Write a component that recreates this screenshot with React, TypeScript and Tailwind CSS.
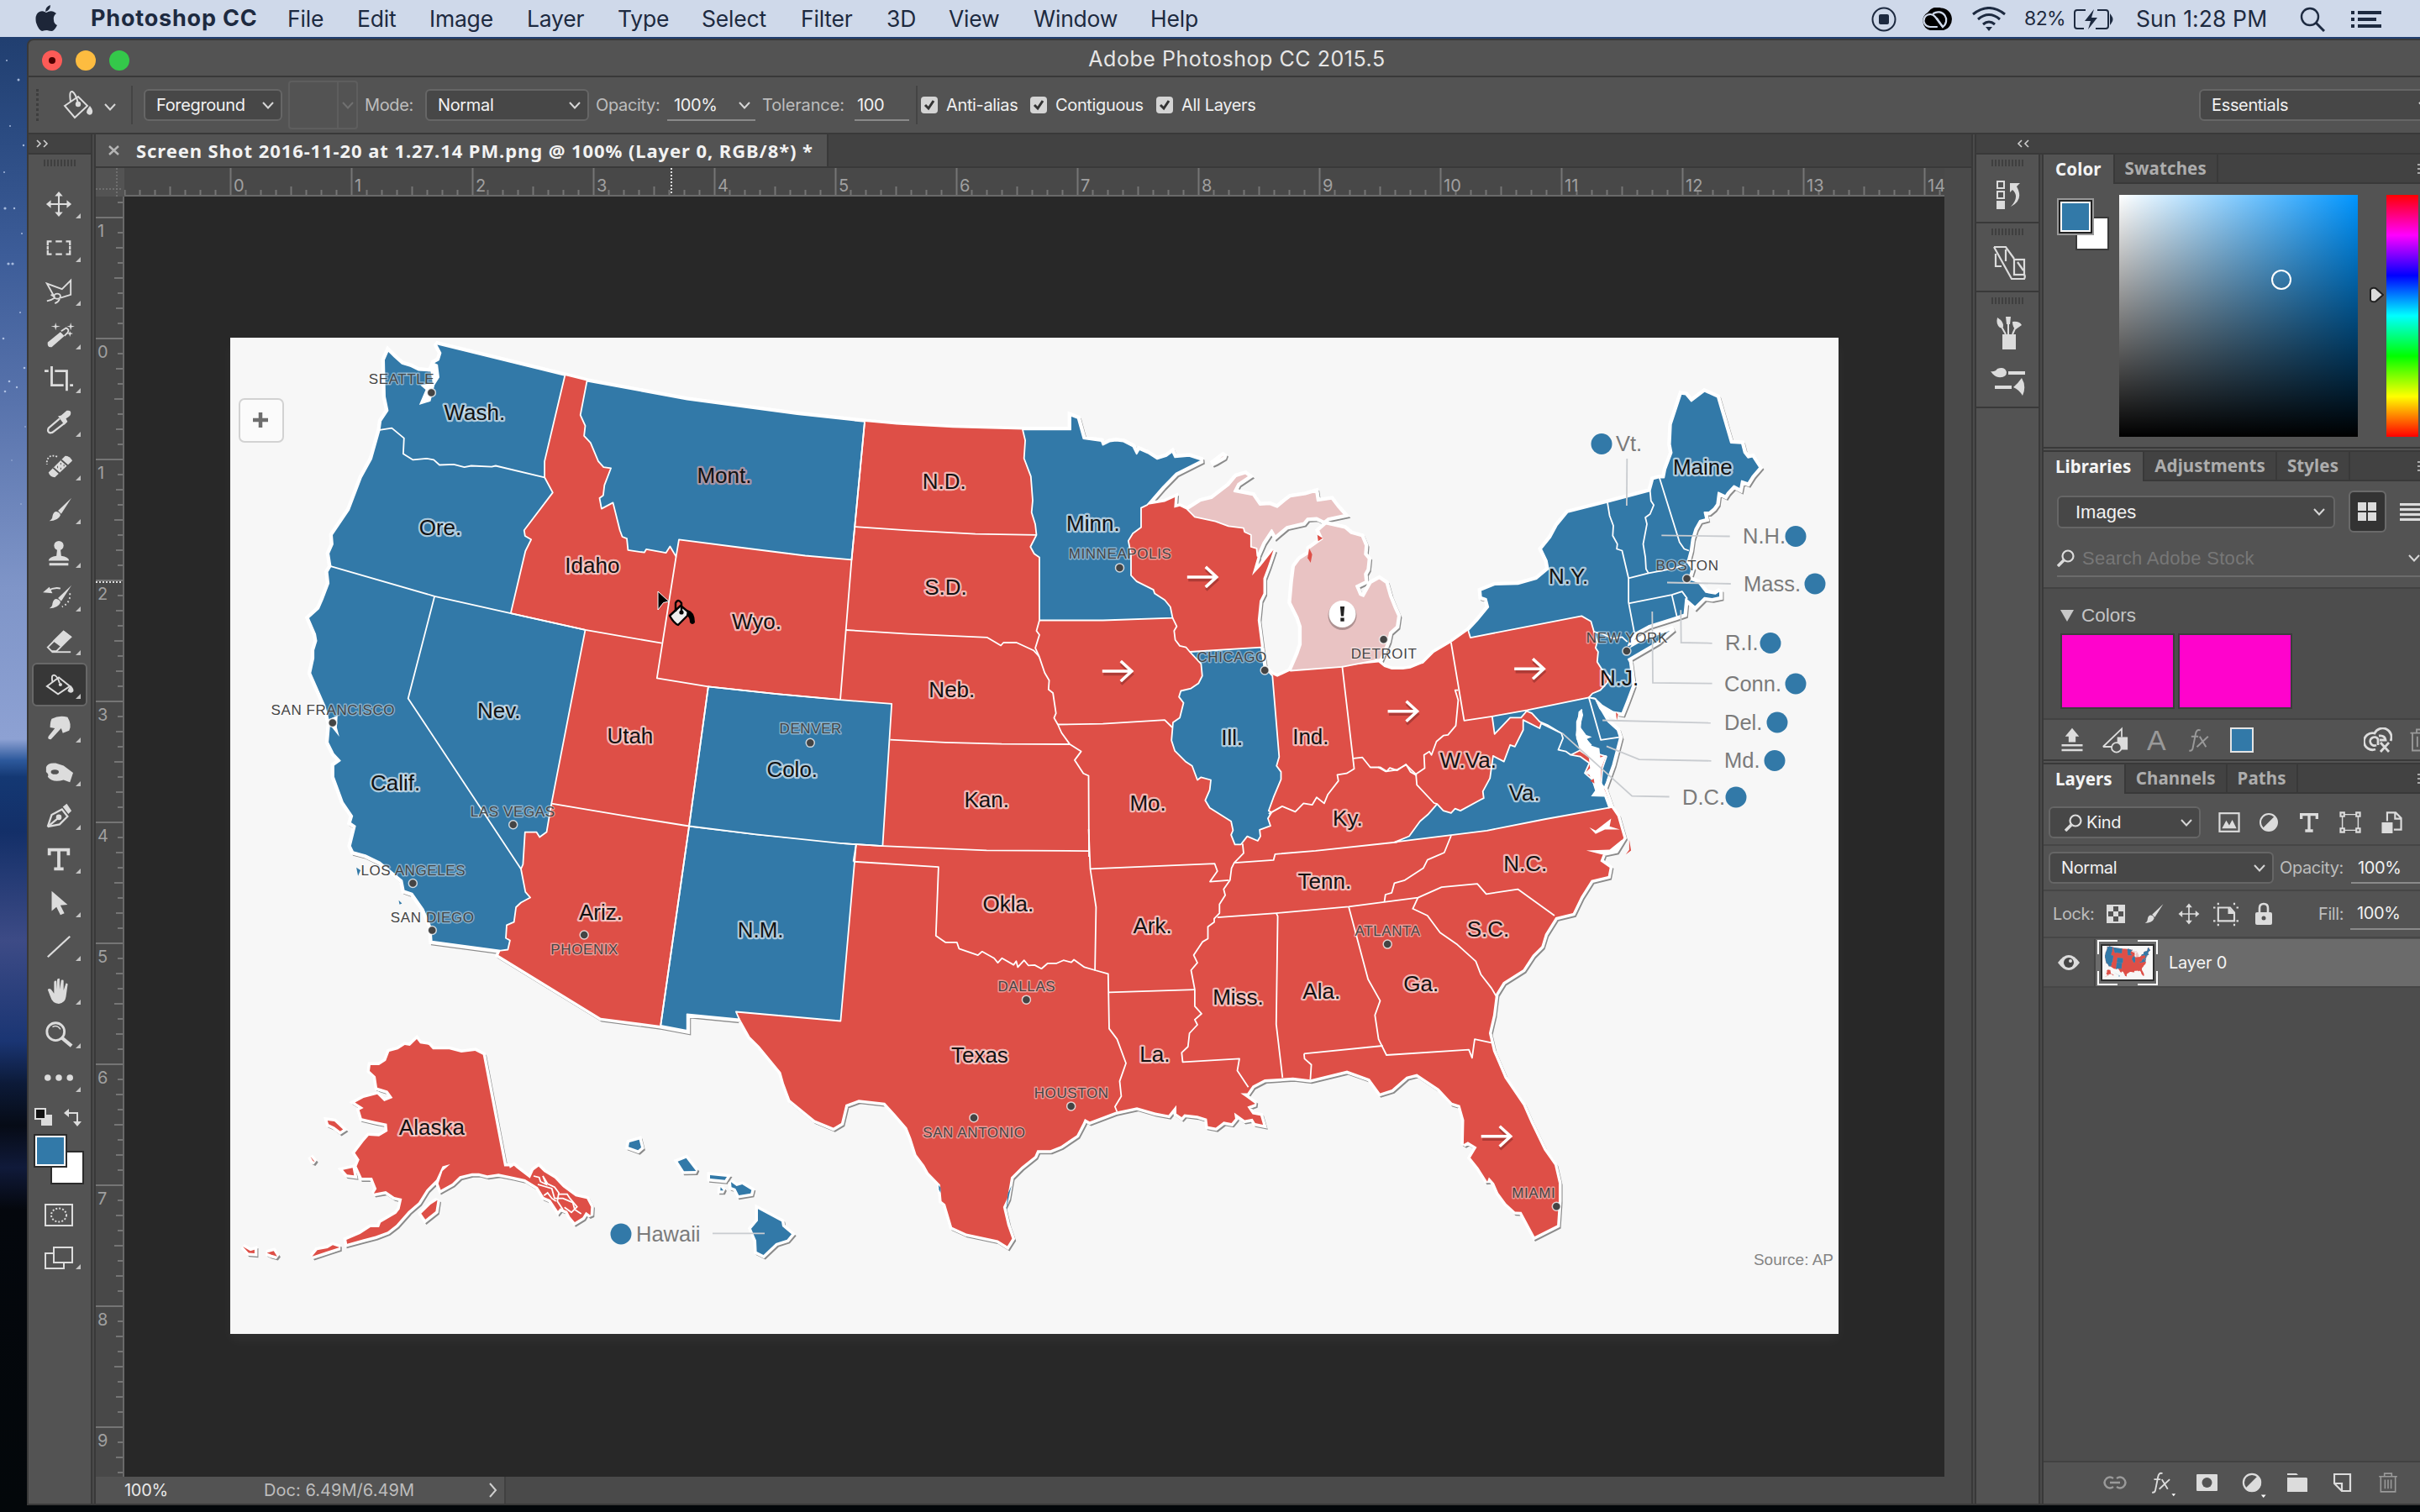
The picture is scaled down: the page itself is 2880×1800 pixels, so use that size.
import React from "react";

type Pt = (s: string) => string;

/** Builds a converter from a local grid (origin + scale) to document pixels. */
const grid =
  (ox: number, oy: number, sx: number, sy: number): Pt =>
  (s) =>
    s
      .split(" ")
      .map((p) => {
        const [x, y] = p.split(",").map(Number);
        return `${(ox + x * sx).toFixed(1)},${(oy + y * sy).toFixed(1)}`;
      })
      .join(" ");

const W = grid(270, 390, 0.4847, 0.5485);
const M = grid(1000, 460, 0.4464, 0.3571);
const E = grid(1640, 440, 0.3699, 0.3954);
const S = grid(1000, 980, 0.625, 0.3571);
const A = grid(0, 960, 0.4082, 0.5357);
const H = grid(560, 1330, 0.3333, 0.3333);
const T = grid(0, 0, 1.8367, 1.8367);

const join = (...parts: string[]) => parts.join(" ");

const BLUE = "#3279a8";
const RED = "#de4f47";
const PINK = "#e9c3c3";

const northWest = "396,50 412,64 430,78 452,84 470,92 500,94 508,76 520,70 525,55 513,35";
const northLine = "830,104 884,116 1130,156 1400,188 1566,204";
const minnNorth =
  "614,144 614,97 633,106 648,174 696,182 700,195 718,184 735,181 755,184 780,200 790,225 797,210 820,222 845,242 870,232 885,218 892,236 930,232 965,246 895,290 860,335 818,395";
const wisconsinEast =
  "865,385 892,370 890,405 905,400 925,412 945,435 1000,450 1035,466 1075,472 1078,485 1095,495 1095,535 1110,538 1112,570 1098,630 1120,600 1155,545 1140,600 1128,640 1128,690 1118,715 1113,780 1122,870";
const lakeSouth = "1130,935 1150,960 1165,968 1200,948 1338,932 1435,920 1450,935 1470,944 1500,944 1520,940 1550,925";
const nyNorth =
  "290,785 320,755 355,715 348,690 332,685 330,665 375,648 450,646 510,630 548,600 543,575 525,540 555,505 575,470 610,430 735,400 875,365 885,330 905,325 920,325 925,300 945,250 940,225 943,165 975,73 990,75 1008,95 1050,65 1092,83 1135,220 1170,222 1178,250 1190,265 1205,262 1228,295 1205,320 1190,342 1170,335 1165,360 1145,350 1125,370 1118,380 1095,370 1090,405 1080,418 1065,430 1050,430 1055,450 1035,455 1020,480 1010,510 1005,545 995,580 1010,600 1000,630 1030,640 1055,670 1085,675 1100,665 1100,685 1075,690 1050,687 1020,715 990,690 985,737 960,745 870,772 825,795 805,830 950,780 900,820 805,872";
const njCoast = "810,880 820,950 800,1000 785,1035 755,1030 720,1010 697,990";
const delCoast = "700,992 715,1020 740,1060 770,1085 778,1108 755,1190 728,1260";

const west = join(
  W(northWest),
  W(
    "830,104 780,290 780,325 800,358 730,440 732,452 747,460 733,485 697,620 880,656 797,1033 785,1095 768,1106 760,1095 732,1095 727,1165 722,1175 733,1225 745,1237 722,1248 710,1258 705,1290 687,1297 685,1325 695,1330 690,1350 672,1352 503,1332 500,1300 482,1262 455,1228 435,1222 430,1200 375,1160 340,1145 310,1138 303,1125 315,1082 303,1075 308,1060 285,1030 262,975 262,950 278,940 262,925 248,900 252,860 240,820 205,750 213,718 213,700 220,680 217,665 200,630 225,610 235,590 250,555 247,530 255,518 250,490 260,470 258,450 300,395 330,325 355,285 375,222 378,203 395,180 388,150 386,70"
  )
);
const montana = W(
  "884,116 868,190 880,213 877,235 893,250 912,290 925,303 943,305 927,342 924,364 915,370 920,393 948,380 965,440 971,454 982,458 985,483 1025,488 1030,481 1078,489 1088,475 1103,497 1110,460 1240,475 1420,495 1534,504 1566,204 1400,188 1130,156"
);
const newMexico = W("1135,1082 1300,1100 1545,1120 1507,1505 1250,1485 1258,1501 1130,1490 1130,1526 1065,1515");
const colorado = join(W("1182,779 1350,795 1500,807"), M("0,1045 137,1058 113,1532 0,1523"), W("1300,1100 1135,1082"));
const minnesota = M(
  "486,144 " +
    minnNorth +
    " 802,405 802,470 780,490 768,515 775,560 775,630 790,650 835,678 838,690 865,712 880,735 886,772 700,780 531,780 531,570 517,558 507,535 523,495 520,460 510,420 513,380 508,300 490,240 493,180"
);
const illinois = M(
  "932,885 1122,870 1130,935 1152,965 1170,1235 1163,1265 1175,1285 1175,1310 1155,1370 1142,1415 1150,1420 1140,1440 1147,1465 1118,1478 1120,1500 1113,1515 1085,1500 1068,1527 1052,1527 1042,1495 1047,1480 1042,1450 985,1405 973,1380 985,1345 988,1312 962,1303 952,1312 938,1265 920,1250 892,1215 883,1180 887,1120 905,1105 915,1055 903,1035 908,1015 935,1007 955,990 965,965 962,925"
);
const northEast = join(
  E(nyNorth),
  E(njCoast),
  E("678,987 690,975 715,965 735,945 747,925 725,910 705,880 708,850 700,838 705,820 695,790 685,758 655,742 297,807")
);
const maryland = join(
  E("367,1044 480,1025 678,987"),
  E(delCoast),
  E("718,1245 722,1200 735,1165 700,1155 680,1140 655,1145 640,1110 640,1060 655,1025 650,1080 665,1110 685,1130 620,1160 580,1145 590,1095 545,1070 520,1060 495,1035 478,1028 460,1048 425,1048 375,1097")
);
const virginia = E(
  "55,1422 100,1405 135,1360 160,1340 190,1308 210,1328 235,1335 248,1322 265,1328 330,1295 340,1290 337,1270 360,1230 370,1163 405,1180 425,1130 440,1135 467,1085 467,1055 520,1080 525,1065 590,1095 595,1110 580,1145 605,1150 620,1160 650,1165 680,1185 665,1215 690,1235 700,1265 728,1270 750,1318 540,1353 350,1388"
);

const mainland = join(
  W(northWest),
  W(northLine),
  M("150,127 300,138 486,144 " + minnNorth + " " + wisconsinEast + " " + lakeSouth),
  E("145,885 180,852 235,822"),
  E(nyNorth),
  E(njCoast),
  E(delCoast),
  E("750,1318 770,1345 782,1385 790,1410 765,1448 725,1456 715,1480 745,1500 740,1525"),
  S(
    "1430,190 1410,245 1395,300 1362,314 1342,370 1335,410 1318,440 1300,488 1262,530 1248,570 1243,640 1235,700 1243,760 1265,850 1300,940 1315,1000 1340,1090 1360,1140 1368,1200 1368,1260 1365,1340 1322,1378 1297,1296 1285,1295 1268,1268 1253,1232 1245,1200 1235,1180 1232,1195 1215,1148 1200,1115 1212,1080 1195,1062 1187,1070 1188,990 1180,940 1165,932 1140,885 1098,836 1078,845 1050,888 1028,900 1008,852 965,825 895,855 862,848 808,854 785,875 775,900 762,900 772,912 790,935 775,945 785,970 800,975 805,1005 790,1000 785,985 770,990 750,965 752,985 745,1000 730,995 715,1015 700,1010 698,985 680,975 655,970 650,980 640,968 640,940 625,973 600,965 565,947 525,962 475,995 465,985 472,960 462,1000 450,1040 420,1076 400,1090 375,1090 370,1110 345,1145 325,1180 318,1250 310,1280 318,1340 327,1385 318,1410 300,1390 240,1368 213,1346 200,1270 193,1260 190,1205 168,1165 160,1140 145,1105 135,1050 127,1015 105,970 85,932 35,922 10,938"
  ),
  T("545,728 540,731 528,726 512,713 508,702 506,695 492,678 486,672"),
  W(
    "1250,1485 1258,1501 1130,1490 1130,1526 1065,1515 918,1498 667,1362 672,1352 503,1332 500,1300 482,1262 455,1228 435,1222 430,1200 375,1160 340,1145 310,1138 303,1125 315,1082 303,1075 308,1060 285,1030 262,975 262,950 278,940 262,925 248,900 252,860 240,820 205,750 213,718 213,700 220,680 217,665 200,630 225,610 235,590 250,555 247,530 255,518 250,490 260,470 258,450 300,395 330,325 355,285 375,222 378,203 395,180 388,150 386,70"
  )
);

const upperMichigan = M(
  "925,410 960,382 990,373 1035,330 1055,300 1080,290 1090,300 1060,325 1050,350 1100,362 1118,395 1145,393 1165,403 1185,382 1200,368 1240,360 1268,350 1272,382 1310,375 1325,400 1345,428 1300,440 1290,450 1270,438 1245,440 1235,455 1190,468 1160,500 1150,478 1128,520 1112,565 1110,540 1095,535 1095,495 1078,485 1075,472 1035,466 1000,450 945,435"
);
const lowerMichigan = M(
  "1295,458 1345,472 1362,490 1390,500 1400,530 1398,560 1408,575 1405,610 1398,625 1400,650 1375,665 1385,695 1395,700 1415,655 1437,640 1455,655 1465,700 1478,740 1487,765 1483,800 1465,820 1460,850 1440,910 1338,935 1200,948 1220,890 1228,860 1228,800 1220,770 1200,720 1205,650 1210,600 1225,575 1250,555 1250,540 1285,508 1275,480"
);
const isleRoyale = M("990,258 1025,225 1022,236 1000,252");

const alaska = join(
  A(
    "1215,517 1225,527 1250,530 1262,540 1310,540 1345,547 1385,543 1408,552 1470,800 1485,800"
  ),
  H("140,182 155,173 165,182 212,218 225,190 243,176 262,195 300,218 330,250 375,283 415,292 430,320 428,350 412,338 400,358 372,375 355,355 345,335 320,325 312,335 285,295 262,285 240,250 195,222 150,212 100,202 60,208 30,200 5,200"),
  A(
    "1340,822 1318,838 1285,852 1278,838 1290,810 1312,795 1290,800 1272,830 1243,852 1220,880 1190,900 1155,930 1130,945 1095,955 1060,962 1012,972 1010,963 1050,950 1080,935 1105,935 1110,925 1155,905 1165,895 1172,872 1150,868 1125,855 1090,860 1098,850 1085,825 1055,825 1040,800 1048,785 1035,770 1060,745 1075,732 1105,733 1130,722 1128,705 1095,700 1055,693 1048,675 1060,670 1035,658 1060,648 1100,640 1120,655 1145,648 1130,632 1100,625 1095,600 1078,588 1080,575 1105,575 1125,565 1135,545 1160,540 1180,530 1195,532"
  )
);
const alaskaIslands = [
  A("955,698 975,700 1000,718 992,722 975,712 958,706"),
  A("905,778 918,790 912,788"),
  A("1000,808 1028,803 1032,820 1012,818"),
  A("708,978 730,988 742,985 742,993 725,992"),
  A("778,992 798,988 808,1000 790,996"),
  A("910,1000 925,986 955,982 970,975 990,980 950,990"),
  A("1228,905 1255,885 1275,875 1270,900 1240,918"),
];
const hawaii = [
  H("567,90 602,80 609,108 598,118 564,106"),
  H("740,158 770,146 805,192 762,193"),
  H("855,207 915,213 908,224 855,219"),
  H("893,250 903,262 892,262"),
  H("930,232 950,246 970,240 1003,260 1000,272 958,279 946,255 932,250"),
  H("1026,328 1110,373 1113,390 1146,418 1130,437 1090,450 1046,492 1022,480 1020,440 1002,398 1026,370"),
];

const borders = [
  W("375,222 405,218 435,240 433,274 457,287 490,284 508,287 522,298 557,297 583,303 600,300 650,302 660,300 780,325"),
  W("255,518 510,583 697,620 880,656 1068,685"),
  W("510,583 445,805 722,1175"),
  W("1103,497 1056,761 1182,779 1135,1082 1065,1515"),
  W("797,1033 1000,1063 1135,1082"),
  join(W("1182,779 1350,795"), M("0,1045")),
  join(M("65,120 30,580 0,1045")),
  M("40,468 180,480 360,492 523,495"),
  M("15,812 180,825 392,837 428,864 435,854 470,854 515,880 530,900"),
  M("531,780 523,815 531,828 520,872 530,900 545,955 557,980 555,1010 567,1022 575,1090 570,1105 580,1127 590,1155 612,1193 642,1217 625,1246 648,1290 662,1298 663,1568"),
  M("133,1178 280,1187 430,1192 612,1193"),
  M("580,1127 700,1125 865,1112 885,1137"),
  M("886,772 897,800 890,815 893,845 905,865 922,870 932,885"),
  M("0,1523 113,1532 390,1547 663,1549"),
  M("1338,932 1370,1275 1350,1290 1325,1295 1328,1315 1300,1360 1290,1390 1270,1370 1258,1395 1235,1390 1213,1418 1178,1400 1142,1425"),
  M("1368,1240 1392,1237 1413,1270 1440,1270 1457,1283 1465,1272 1485,1280 1508,1260 1520,1285 1537,1297"),
  E("0,1197 25,1210 60,1205 90,1190 122,1218 150,1200 148,1160 165,1150 172,1160 188,1120 210,1102 225,1100 250,1072 258,995 248,965 258,965"),
  E("235,822 277,1057 367,1044"),
  E("122,1218 125,1250 180,1305 190,1308"),
  join(S("750,132 825,123 828,103 905,92 1060,63"), E("55,1422")),
  S("1163,42 1150,98 1118,122 1110,150 1075,190 1055,200 1050,232 1038,238 1036,263"),
  S("718,314 830,300 968,278 1100,248 1145,213 1213,202 1230,236 1290,220 1360,308"),
  S("830,300 833,310 830,670 842,848"),
  S("968,278 1005,520 1028,592 1018,640 1025,720 1040,773 1197,755 1203,782 1208,720 1240,732"),
  S("883,768 1033,742"),
  S("883,768 884,785 897,805 895,855"),
  S("1100,248 1090,285 1118,308 1142,365 1175,405 1210,460 1220,505 1240,550 1250,580"),
  S("766,68 768,100 750,132 745,150 742,190 730,220 733,240 722,270 722,300 712,318 712,330 700,345 700,385 690,395 673,440 680,465 668,490 675,555 675,610 688,635 675,655 680,672 665,700 662,745 650,765 652,796 760,785 756,825 777,880"),
  S("476,152 713,135 718,160 704,195 740,190"),
  S("473,20 476,152 487,280 485,490 510,502 512,685 527,720 544,800 532,860 535,910 523,945 527,962"),
  S("25,128 187,146 182,375 200,397 222,397 226,418 262,440 270,428 293,450 300,465 308,450 330,472 335,460 338,480 350,457 358,474 370,473 383,485 395,467 412,467 425,457 440,464 445,455 465,480 485,490"),
  S("512,564 675,555"),
  S("25,128 30,72"),
  E("738,400 745,440 757,470 755,500 770,525 768,540 785,545 806,628 806,700 825,795"),
  E("875,365 878,395 887,408 875,435 860,445 865,465 853,525 860,565 862,600 870,613"),
  E("905,325 970,520 985,540 1000,545"),
  E("806,628 870,613 945,600 990,588"),
  E("806,704 945,678 978,668 995,690"),
  E("945,678 962,745"),
  E("695,790 720,795 755,810 785,805 802,820"),
  E("678,987 717,1115 776,1107"),
];

const labels: [string, number, number][] = [
  ["Wash.", 307.3, 268], ["Ore.", 285, 342.5], ["Idaho", 383.5, 367], ["Mont.", 469, 308.5],
  ["Wyo.", 490, 403.5], ["Nev.", 323, 461], ["Utah", 408, 477.5], ["Calif.", 256, 508],
  ["Colo.", 513, 499], ["Ariz.", 389, 592], ["N.M.", 492.5, 603], ["N.D.", 611.5, 312.5],
  ["S.D.", 612.5, 381], ["Neb.", 616.5, 447.5], ["Kan.", 639, 519], ["Minn.", 708, 340],
  ["Ill.", 798, 478.5], ["Ind.", 849, 478], ["Mo.", 743.5, 521], ["Ky.", 873, 531],
  ["Okla.", 653, 586.5], ["Ark.", 746.5, 600.5], ["Tenn.", 858, 571.5], ["Miss.", 802, 647],
  ["Ala.", 856, 643], ["Ga.", 920.5, 638], ["Texas", 634.5, 684.5], ["La.", 748, 684],
  ["N.C.", 988, 560], ["S.C.", 964, 602.5], ["Va.", 987.5, 514.5], ["W.Va.", 951, 493.5],
  ["N.Y.", 1016, 374], ["N.J.", 1049, 440], ["Maine", 1103, 303], ["Alaska", 279.5, 731],
];

// name, text centre x, text centre y, dot x, dot y
const cities: [string, number, number, number, number][] = [
  ["SEATTLE", 260, 245.5, 279.5, 254.5], ["SAN FRANCISCO", 215.5, 460, 215.5, 468.5],
  ["LAS VEGAS", 332, 526, 332.5, 534.5], ["LOS ANGELES", 267.5, 564, 267.5, 572.5],
  ["SAN DIEGO", 280, 594.5, 280, 603], ["PHOENIX", 378.5, 615.5, 378.5, 606],
  ["DENVER", 525, 472, 525, 481.5], ["MINNEAPOLIS", 725.5, 359, 725.5, 368],
  ["CHICAGO", 798, 426, 819.5, 434.5], ["DETROIT", 896.5, 423.5, 896.5, 414.5],
  ["BOSTON", 1093, 366.5, 1093, 375], ["NEW YORK", 1054, 413, 1054, 422],
  ["ATLANTA", 899, 603, 899, 612], ["DALLAS", 665, 639, 665, 648],
  ["HOUSTON", 694, 708.5, 694, 717], ["SAN ANTONIO", 631, 734, 631, 724.5],
  ["MIAMI", 993.5, 773, 1008.5, 782],
];

// name, text left, centre y, circle x
const callouts: [string, number, number, number][] = [
  ["Vt.", 1923, 528.5, 1906], ["N.H.", 2074, 638.5, 2137], ["Mass.", 2075, 695, 2160],
  ["R.I.", 2053, 765.5, 2107], ["Conn.", 2052, 814, 2137], ["Del.", 2052, 860, 2115],
  ["Md.", 2052, 905.5, 2112], ["D.C.", 2002, 949, 2066], ["Hawaii", 757, 1469, 739],
];

const leaders = [
  E("801,268 800,410"), E("912,499 1132,502"), E("930,641 1135,645"), E("974,724 975,822 1075,824"),
  E("882,728 884,943 1075,945"), E("722,1056 1070,1064"), E("735,1134 840,1174 1072,1178"),
  E("592,1094 817,1284 937,1286"), H("864,415 1050,415"),
];

const arrows: [number, number][] = [[779, 374], [724, 435], [909, 461], [991, 433.5], [969.5, 736.5]];

function Shapes() {
  return (
    <g strokeLinejoin="round">
      <polygon points={mainland} fill={RED} />
      {[west, montana, newMexico, colorado, minnesota, illinois, northEast, maryland, virginia].map((p, i) => (
        <polygon key={i} points={p} fill={BLUE} stroke="#fff" strokeWidth={1.8} />
      ))}
      {[upperMichigan, lowerMichigan, isleRoyale].map((p, i) => (
        <polygon key={i} points={p} fill={PINK} stroke="#fff" strokeWidth={1.8} />
      ))}
      <polygon points={alaska} fill={RED} />
      {alaskaIslands.map((p, i) => (
        <polygon key={i} points={p} fill={RED} />
      ))}
      {hawaii.map((p, i) => (
        <polygon key={i} points={p} fill={BLUE} />
      ))}
    </g>
  );
}

function Coast() {
  const all = [mainland, upperMichigan, lowerMichigan, isleRoyale, alaska, ...alaskaIslands, ...hawaii];
  return (
    <g strokeLinejoin="miter" strokeMiterlimit={2}>
      <g transform="translate(1.8 2.2)" fill="#8b8b8b" stroke="#8b8b8b" strokeWidth={5.5}>
        {all.map((p, i) => (
          <polygon key={i} points={p} />
        ))}
      </g>
      <g fill="#fff" stroke="#fff" strokeWidth={7}>
        {all.map((p, i) => (
          <polygon key={i} points={p} />
        ))}
      </g>
    </g>
  );
}

function ElectionMap() {
  return (
    <svg viewBox="274 402 1914 1186" className="block h-full w-full font-['Liberation_Sans',sans-serif]">
      <Coast />
      <Shapes />
      <g fill="none" stroke="#fff" strokeWidth={1.8} strokeLinejoin="round">
        {borders.map((p, i) => (
          <polyline key={i} points={p} />
        ))}
      </g>
      {/* Puget Sound, San Francisco Bay, Green Bay, Chesapeake and Pamlico inlets */}
      <g fill="#fff">
        <polygon points={W("505,75 518,80 522,108 510,125 500,160 472,168 488,135 475,125 505,120 500,95")} />
        <polygon points={W("250,850 272,842 270,868 276,888 258,868")} />
        <polygon points={E("655,1022 660,1040 650,1075 670,1100 688,1106 672,1112 685,1132 712,1140 715,1168 735,1160 718,1200 716,1240 728,1262 750,1318 742,1322 728,1286 685,1285 700,1265 680,1220 665,1215 682,1200 678,1168 650,1150 636,1100 645,1030")} />
        <polygon points={E("697,990 720,1012 755,1028 778,1035 768,1056 730,1040 712,1022")} />
        <polygon points={E("680,1378 700,1388 750,1352 745,1375 778,1385 730,1385 700,1398")} />
        <polygon points={E("670,1448 745,1445 785,1415 790,1420 762,1455 720,1460")} />
        <polygon points={E("822,820 880,785 925,780 905,790 845,820 808,840")} />
      </g>
      <g fill={BLUE}>
        <polygon points={E("722,1250 728,1215 750,1160 745,1200 732,1245")} />
        <polygon points={W("318,1172 328,1178 322,1190")} />
        <polygon points={W("422,1243 430,1250 424,1252")} />
        <polygon points={S("326,1208 322,1235 316,1290 319,1235")} />
        <polygon points={S("187,1206 191,1215 191,1232 188,1222")} />
      </g>
      <g fill={RED}>
        <polygon points={E("765,1032 772,1038 768,1056")} />
        <polygon points={E("682,1238 694,1232 696,1246")} />
        <polygon points={E("808,1415 814,1448 797,1460 808,1446")} />
        <polygon points={M("1272,495 1286,506 1274,516")} />
        <polygon points={M("1250,540 1258,560 1254,588 1246,572")} />
      </g>
      <g fill="none" stroke="#fff" strokeWidth={1.8}>
        <polyline points={H("225,210 245,215 250,230 270,240 258,210 275,238 300,250 315,270 310,300 330,330")} />
        <polyline points={H("240,240 290,255 300,290 330,290 365,305 372,330 395,345")} />
        <polyline points={H("315,275 345,275 355,290 380,320 360,340 335,322")} />
        <polyline points={H("262,280 275,270 290,290 305,300")} />
      </g>
      <g fill="none" stroke="#c9ccd0" strokeWidth={1.8}>
        {leaders.map((p, i) => (
          <polyline key={i} points={p} />
        ))}
      </g>
      <g textAnchor="middle" fill="#454545" stroke="#ffffff" strokeOpacity={0.42} strokeWidth={2.8} strokeLinejoin="round" fontSize={17} letterSpacing={0.6} style={{ paintOrder: "stroke" }}>
        {cities.map(([name, x, y]) => (
          <text key={name} x={x * 1.8367 + 0.5} y={y * 1.8367 + 6}>{name}</text>
        ))}
      </g>
      {cities.map(([name, , , x, y]) => (
        <circle key={name} cx={x * 1.8367} cy={y * 1.8367} r={5} fill="#444" stroke="#fff" strokeOpacity={0.75} strokeWidth={1.5} />
      ))}
      <g textAnchor="middle" fill="#111" strokeOpacity={0.62} strokeWidth={4.5} strokeLinejoin="round" fontSize={26} style={{ paintOrder: "stroke" }}>
        {labels.map(([name, x, y]) => (
          <text key={name} x={x * 1.8367 + 0.5} y={y * 1.8367 + 8} stroke={name === "Mont." ? "#f2a8a4" : "#ffffff"}>{name}</text>
        ))}
      </g>
      {callouts.map(([name, x, y, cx]) => (
        <g key={name}>
          <text x={x} y={y + 8.5} fontSize={25.5} fill="#7b7b7b">{name}</text>
          <circle cx={cx} cy={y} r={12.5} fill={BLUE} />
        </g>
      ))}
      {arrows.map(([x, y]) => (
        <g key={x} transform={`translate(${x * 1.8367} ${y * 1.8367})`} fill="none" strokeWidth={3.6}>
          <path d="M-17 2H17M4-10L17 2L4 14" stroke="#8d2f2b" strokeOpacity={0.6} transform="translate(.5 1.5)" />
          <path d="M-18 0H17M4-12L17 0L4 12" stroke="#fff" />
        </g>
      ))}
      <g transform="translate(1597.5 731)">
        <circle r={17} cy={2} fill="#000" opacity={0.25} />
        <circle r={16} fill="#fff" />
        <path d="M-2.6-9h5.2l-1 11.500h-3.200zM-2.200 4.500h4.400v4.200h-4.400z" fill="#222" />
      </g>
      <text x={2182} y={1506} textAnchor="end" fontSize={19} fill="#848484">Source: AP</text>
      <g transform="translate(783 704)">
        <path d="M0 0L13 12L6.500 13.500L0 22Z" fill="#000" stroke="#fff" strokeWidth={1} />
        <path d="M14 29L27 17L38 26L24 40Q19 38 14 29Z" fill="#eee" stroke="#000" strokeWidth={2.4} strokeLinejoin="round" />
        <path d="M21 24V14q3-6 7 0v10" fill="none" stroke="#000" strokeWidth={2.4} />
        <circle cx={28} cy={25} r={2.6} />
        <path d="M35 22q9 2 9 15q-3 4-6 0q0-6-4-9z" />
      </g>
    </svg>
  );
}

/* ---------- icons (36 x 36 grid) ---------- */

const L = "#dcdcdc";

function Ico({ children, s = 36, className = "" }: { children: React.ReactNode; s?: number; className?: string }) {
  return (
    <svg width={s} height={s} viewBox="0 0 36 36" fill="none" stroke={L} strokeWidth={2} className={"shrink-0 " + className}>
      {children}
    </svg>
  );
}

const brushBody = (
  <g fill={L} stroke="none">
    <path d="M34 3L17 19l4 4Z" />
    <path d="M15 20q5 1 5 5q-3 7-14 7q4-2 4-6q1-6 5-6z" />
  </g>
);

const bucketArt = (
  <>
    <path d="M3 20L18 9L32 20L17 30Z" />
    <path d="M10 15q-2-9 2-9q4 1 7 10" />
    <circle cx="20" cy="18" r="2.200" fill={L} stroke="none" />
    <path d="M33 19q5 5 3 8q-4 3-7-1q1-3 4-7z" fill={L} stroke="none" />
  </>
);

const moveArt = (
  <g>
    <path d="M18 6V30M6 18H30" strokeWidth={2.200} />
    <path d="M18 2l5 6h-10zM18 34l5-6h-10zM2 18l6-5v10zM34 18l-6-5v10z" fill={L} stroke="none" />
  </g>
);

const fxArt = (c: string) => (
  <g stroke={c} strokeWidth={2.400}>
    <path d="M20 4q-6-2-7 6l-4 20q-1 4-5 3M7 13h10M19 13l9 15M31 13L15 28" />
  </g>
);

const trashArt = (
  <g stroke="#9a9a9a" strokeWidth={2.200}>
    <path d="M3 8H33M12 8V3H24V8M6 8V33H30V8M13 13V28M18 13V28M23 13V28" />
  </g>
);

const tools: { name: string; art: React.ReactNode }[] = [
  { name: "Move", art: moveArt },
  { name: "Marquee", art: <path d="M4 15V10H9M14 10h8M27 10h5v5M32 21v5h-5M22 26h-8M9 26H4v-5M4 16v4M32 16v4" strokeWidth={2.400} /> },
  { name: "Lasso", art: <g><path d="M12 24L3 8L22 15L33 4V22L20 26" /><ellipse cx="16" cy="24" rx="4" ry="3.200" /><path d="M3 30q6-1 10-4M19 27q-1 4-6 6M8 22l5 3" /></g> },
  {
    name: "Wand",
    art: (
      <g fill={L} stroke="none">
        <path d="M4 27L20 14l5 5L9 33q-6 1-5-6z" />
        <path d="M21 13l6-4q5 2 2 6l-4 4" fill="none" stroke={L} strokeWidth={2} />
        <path d="M14 2l1 4 5 1-5 1-1 4-1-4-5-1 5-1zM33 2l1 4 4 1-4 1-1 4-1-4-4-1 4-1zM32 13l1 2 3 1-3 1-1 3-1-3-3-1 3-1z" />
      </g>
    ),
  },
  { name: "Crop", art: <path d="M0 8h5M9 2V26H24M13 8H28V33M32 26h4" strokeWidth={3} /> },
  {
    name: "Eyedropper",
    art: (
      <>
        <path d="M19 13L5 25q-2 5 2 6q3 0 5-2L25 19" strokeWidth={2.400} />
        <path d="M17 10l4-1 7-6q6-1 5 4q0 3-6 6l2 4-4 4z" fill={L} stroke="none" />
      </>
    ),
  },
  {
    name: "Healing",
    art: (
      <>
        <path d="M16 6Q5 2 3 12v4" strokeDasharray="2 2" />
        <path d="M5 26L26 5q6 0 9 6L13 32q-6 0-8-6z" fill={L} stroke="none" />
        <path d="M11 20l9 8M21 10l9 8" stroke="#535353" />
        <path d="M16 19h1M20 15h1M20 21h1M24 17h1" stroke="#535353" strokeWidth={2.500} />
      </>
    ),
  },
  { name: "Brush", art: brushBody },
  { name: "Stamp", art: <g fill={L} stroke="none"><ellipse cx="18" cy="8" rx="6" ry="6" /><path d="M16 12h4l1 9q9 1 10 6H5q1-5 10-6zM6 30h24v3H6z" /></g> },
  {
    name: "History brush",
    art: (
      <>
        {brushBody}
        <path d="M4 10q8-5 16-3" />
        <path d="M-2 12l8-7 4 8z" fill={L} stroke="none" />
        <path d="M32 13q1 12-10 17" strokeDasharray="2 3" />
      </>
    ),
  },
  {
    name: "Eraser",
    art: (
      <>
        <path d="M4 26L24 6L33 13L15 31H9Z" />
        <path d="M12 18L24 6L33 13L20 24Z" fill={L} />
        <path d="M9 32H33" />
      </>
    ),
  },
  { name: "Bucket", art: bucketArt },
  { name: "Smudge", art: <path d="M9 6q10-5 20-2q6 10 2 17l-8 3-2-6-13 14q-5 0-3-4l8-10-6-1q0-7 2-11z" fill={L} stroke="none" /> },
  {
    name: "Dodge",
    art: (
      <>
        <path d="M2 12q2-6 12-5l10 3 12 9-4 12-8-3q-14 4-20-4q2-3-2-6z" fill={L} stroke="none" />
        <ellipse cx="13" cy="18" rx="6" ry="4" fill="#535353" stroke={L} />
      </>
    ),
  },
  {
    name: "Pen",
    art: (
      <>
        <path d="M4 32L9 17L22 10L29 19L19 29L4 32L16 22" strokeWidth={2.400} />
        <circle cx="18" cy="20" r="2.500" fill={L} />
        <path d="M23 7l5-4 6 9-4 4z" fill={L} stroke="none" />
      </>
    ),
  },
  { name: "Type", art: <path d="M6 13V6H30V13M18 6V30M12 30H24" strokeWidth={4} /> },
  { name: "Select", art: <path d="M9 3V28L15 23L20 33L25 31L20 21L29 20Z" fill={L} stroke="none" /> },
  { name: "Line", art: <path d="M4 31L32 5" strokeWidth={2.400} /> },
  { name: "Hand", art: <path d="M4 17q3-3 6 2l2 3V8q0-3 3-2v11l1-13q3-2 3 0v13l2-12q3-1 3 1v12l3-9q3 0 2 3l-2 14q-1 8-9 9q-8 0-11-10z" fill={L} stroke="none" /> },
  {
    name: "Zoom",
    art: (
      <>
        <circle cx="14" cy="15" r="11" strokeWidth={3} />
        <path d="M10 9q6-3 10 3" strokeWidth={1.500} />
        <path d="M22 23L34 33" strokeWidth={4.500} />
      </>
    ),
  },
  { name: "More", art: <g fill={L} stroke="none"><circle cx="4" cy="18" r="4" /><circle cx="18" cy="18" r="4" /><circle cx="32" cy="18" r="4" /></g> },
];

function Chevron({ c = "#d6d6d6" }: { c?: string }) {
  return (
    <svg width="14" height="9" viewBox="0 0 14 9" fill="none" stroke={c} strokeWidth="2" className="shrink-0">
      <path d="M1 1L7 7.500L13 1" />
    </svg>
  );
}

function Select({ label, className }: { label: React.ReactNode; className: string }) {
  return (
    <div className={"flex h-[38px] shrink-0 items-center justify-between rounded-md border-2 border-[#666] bg-[#474747] pr-2 pl-[13px] text-[#f2f2f2] " + className}>
      <span className="flex items-center whitespace-nowrap">{label}</span>
      <Chevron />
    </div>
  );
}

function Check({ label, className }: { label: string; className: string }) {
  return (
    <label className={"flex shrink-0 items-center gap-[10px] whitespace-nowrap text-[#f0f0f0] " + className}>
      <span className="flex size-5 items-center justify-center rounded-[4px] bg-[#d4d4d4]">
        <svg width="14" height="14" viewBox="0 0 14 14" fill="none" stroke="#333" strokeWidth="3"><path d="M2 7L6 11L12 2" /></svg>
      </span>
      {label}
    </label>
  );
}

function MenuBar() {
  const items: [string, string][] = [
    ["File", "w-[83px]"], ["Edit", "w-[86px]"], ["Image", "w-[116px]"], ["Layer", "w-[108px]"],
    ["Type", "w-[100px]"], ["Select", "w-[118px]"], ["Filter", "w-[102px]"], ["3D", "w-[74px]"],
    ["View", "w-[101px]"], ["Window", "w-[139px]"], ["Help", "w-[80px]"],
  ];
  return (
    <header className="flex h-[44px] w-full shrink-0 items-center bg-[#cfd9ea] pt-[1px] text-[26.5px] tracking-[-0.2px] text-[#1d2a40]">
      <svg width="26" height="32" viewBox="0 0 26 32" className="mb-1 ml-[42px] shrink-0" fill="#1d2638">
        <path d="M18 1q0 6-6 8q0-6 6-8zM13 10q5-3 9-1l3 2q-4 3-3 8q0 4 4 6q-3 6-6 7q-3 0-6-1q-3 0-6 1q-4-1-7-10q-2-10 4-13q4-2 8 1z" />
      </svg>
      <span className="ml-[40px] w-[234px] text-[27px] font-bold tracking-[0.8px]">Photoshop CC</span>
      {items.map(([t, w]) => (
        <span key={t} className={w}>{t}</span>
      ))}
      <div className="ml-auto flex items-center">
        <svg width="30" height="30" viewBox="0 0 30 30" className="mr-[28px]"><circle cx="15" cy="15" r="13.500" fill="none" stroke="#1d2a40" strokeWidth="2" /><rect x="9" y="9" width="12" height="12" rx="2" fill="#1d2a40" /></svg>
        <svg width="40" height="28" viewBox="0 0 40 28" className="mr-[21px]" fill="none">
          <path d="M12 27A11.500 11.500 0 0 1 9 6A13 13 0 0 1 25 0.500A13.500 13.500 0 0 1 28 27Z" fill="#000" />
          <g stroke="#cfd9ea" strokeWidth="2.200" strokeLinecap="round"><path d="M20 23H12A7.500 7.500 0 1 1 18 11L27 23" /><path d="M16 7A9.500 9.500 0 1 1 27 23L20 13" /></g>
        </svg>
        <svg width="42" height="30" viewBox="0 0 42 30" className="mr-[21px]" fill="none" stroke="#1d2a40" strokeWidth="3">
          <path d="M2 9Q21-6 40 9M8 15Q21 4 34 15M14 21Q21 15 28 21" /><path d="M17 24h8l-4 5z" fill="#1d2a40" stroke="none" />
        </svg>
        <span className="w-[58px] text-[23px] tracking-[-0.6px]">82%</span>
        <svg width="48" height="26" viewBox="0 0 48 26" className="mr-[27px]" fill="none" stroke="#1d2a40" strokeWidth="2">
          <path d="M15 2H5Q2 2 2 5V21Q2 24 5 24H13M29 2H39Q42 2 42 5V21Q42 24 39 24H27" /><path d="M45 9q3 4 0 8z" fill="#1d2a40" />
          <path d="M25 1L14 15H21L18 25L29 11H22Z" fill="#1d2a40" stroke="none" />
        </svg>
        <span className="w-[195px] text-[26.500px] tracking-[0.1px] whitespace-nowrap">Sun 1:28 PM</span>
        <svg width="30" height="30" viewBox="0 0 30 30" className="mr-[31px]" fill="none" stroke="#1d2a40" strokeWidth="2.400"><circle cx="12" cy="12" r="10" /><path d="M19 19L29 29" strokeWidth="3" /></svg>
        <svg width="36" height="22" viewBox="0 0 36 22" className="mr-[46px]" fill="#1d2a40"><path d="M0 1h4v4H0zM0 9h4v4H0zM0 17h4v4H0zM8 1h28v4H8zM8 9h22v4H8zM8 17h28v4H8z" /></svg>
      </div>
    </header>
  );
}

function OptionsBar() {
  return (
    <div className="flex h-[68px] shrink-0 items-center border-b-2 border-[#393939] text-[20px] tracking-[-0.35px] text-[#bdbdbd]">
      <div className="ml-[9px] h-[38px] border-l-[3px] border-dotted border-[#3d3d3d]" />
      <svg width="38" height="38" viewBox="0 0 38 38" fill="none" stroke={L} strokeWidth={2} className="ml-[28px] shrink-0">
        <path d="M3 20L19 9L30 20L15 34Z" /><path d="M10 15Q8 2 12 3q4 2 7 14" /><circle cx="19" cy="18" r="2.200" fill={L} />
        <path d="M33 20q5 6 2 10q-4 2-6-2q0-3 4-8z" fill={L} stroke="none" />
      </svg>
      <div className="mt-[5px] ml-[12px]"><Chevron /></div>
      <div className="ml-[18px] h-[46px] w-[2px] bg-[#444]" />
      <Select label="Foreground" className="ml-[13px] w-[165px]" />
      <div className="ml-[7px] flex h-[58px] w-[83px] shrink-0 items-center justify-end rounded border-2 border-[#5e5e5e]">
        <div className="flex h-full w-[23px] items-center justify-center border-l-2 border-[#5e5e5e]"><Chevron c="#707070" /></div>
      </div>
      <span className="ml-[8px] w-[72px]">Mode:</span>
      <Select label="Normal" className="w-[195px]" />
      <span className="ml-[8px] w-[85px]">Opacity:</span>
      <div className="flex h-[38px] w-[105px] items-center justify-between border-b-2 border-[#8a8a8a] pt-[2px] pr-[6px] pl-[8px] text-[#f0f0f0]">100%<Chevron /></div>
      <span className="ml-[8px] w-[110px] tracking-[-0.15px]">Tolerance:</span>
      <div className="flex h-[38px] w-[65px] items-center border-b-2 border-[#8a8a8a] pt-[2px] pl-[3px] text-[#f0f0f0]">100</div>
      <div className="ml-[8px] h-[46px] w-[2px] bg-[#444]" />
      <Check label="Anti-alias" className="ml-[4px] w-[130px]" />
      <Check label="Contiguous" className="w-[150px]" />
      <Check label="All Layers" className="w-[150px]" />
      <Select label="Essentials" className="ml-[1091px] w-[285px]" />
    </div>
  );
}

function Grip() {
  return <div className="mx-auto h-[8px] w-[38px] shrink-0 bg-[repeating-linear-gradient(90deg,#3f3f3f_0_2px,transparent_2px_4px)]" />;
}

function Divider() {
  return <div className="w-[6px] shrink-0 border-x-2 border-[#393939] bg-[#4a4a4a]" />;
}

const corner = <svg width="6" height="6" viewBox="0 0 6 6" className="absolute right-[12px] bottom-[9px]"><path d="M6 0V6H0Z" fill="#c4c4c4" /></svg>;

function Toolbar() {
  return (
    <aside className="flex w-[74px] shrink-0 flex-col bg-[#535353]">
      <div className="flex h-[24px] shrink-0 items-center border-b-2 border-[#393939] bg-[#424242] pl-[9px]">
        <svg width="15" height="10" viewBox="0 0 15 10" fill="none" stroke="#cfcfcf" strokeWidth="1.600"><path d="M1 1L5 5L1 9M9 1L13 5L9 9" /></svg>
      </div>
      <div className="mt-[6px] flex"><Grip /></div>
      <div className="mt-[19px] flex flex-col">
        {tools.map((t) => (
          <div key={t.name} title={t.name} className="relative flex h-[52px] items-center justify-center pr-[2px]">
            {t.name === "Bucket" && <div className="absolute inset-y-0 left-[4px] w-[66px] rounded-md border-2 border-[#686868] bg-[#373737]" />}
            <Ico s={34} className="relative overflow-visible">{t.art}</Ico>
            {corner}
          </div>
        ))}
      </div>
      <div className="mt-[10px] flex h-[24px] items-start justify-between pr-[10px] pl-[7px]">
        <svg width="21" height="22" viewBox="0 0 21 22"><rect x="8" y="8" width="13" height="13" fill={L} /><rect x="1" y="1" width="12" height="12" fill="#111" stroke={L} strokeWidth="2" /></svg>
        <svg width="22" height="22" viewBox="0 0 22 22" fill="none" stroke={L} strokeWidth="2"><path d="M4 6H16V17" /><path d="M0 6l6-5v10zM16 22l-5-6h10z" fill={L} stroke="none" /></svg>
      </div>
      <div className="relative mt-[7px] ml-[6px] h-[60px] w-[60px]">
        <div className="absolute right-0 bottom-0 size-[40px] border-2 border-[#2c2c2c] bg-white" />
        <div className="absolute top-0 left-0 size-[40px] border-2 border-[#2c2c2c] bg-white p-[2px]"><div className="h-full w-full bg-[#3279a8]" /></div>
      </div>
      <svg width="34" height="27" viewBox="0 0 34 27" className="mt-[23px] ml-[19px]" fill="none" stroke={L} strokeWidth="2"><rect x="1" y="1" width="32" height="25" /><ellipse cx="17" cy="13.500" rx="9" ry="8" strokeDasharray="2 2" /></svg>
      <div className="relative mt-[16px] h-[44px]">
        <svg width="34" height="36" viewBox="0 0 34 36" className="mt-[8px] ml-[19px]" fill="#535353" stroke={L} strokeWidth="2"><rect x="1" y="8" width="22" height="18" /><rect x="11" y="1" width="22" height="18" /></svg>
        {corner}
      </div>
    </aside>
  );
}

function TopRuler() {
  const ticks = Array.from({ length: 121 }, (_, i) => i - 7);
  return (
    <svg width="2166" height="34" viewBox="148 200 2166 34" className="block shrink-0 bg-[#484848] font-['Inter',sans-serif]">
      {ticks.map((i) => {
        const x = 274.5 + i * 18;
        const top = i % 8 === 0 ? 200 : i % 4 === 0 ? 222 : 226;
        return <path key={i} d={`M${x} ${top}V232`} stroke="#757575" strokeWidth="2" />;
      })}
      {Array.from({ length: 15 }, (_, i) => (
        <text key={i} x={278 + i * 144} y={228} fontSize={20} fill="#a0a0a0">{i}</text>
      ))}
      <path d="M799 200V232" stroke="#ddd" strokeWidth="2" strokeDasharray="2 2" />
      <path d="M148 233H2314" stroke="#696969" strokeWidth="2" />
    </svg>
  );
}

function SideRuler() {
  const ticks = Array.from({ length: 85 }, (_, i) => i - 9);
  return (
    <svg width="34" height="1524" viewBox="114 234 34 1524" className="block shrink-0 bg-[#484848] font-['Inter',sans-serif]">
      {ticks.map((i) => {
        const y = 403 + i * 18;
        const x = i % 8 === 0 ? 114 : i % 4 === 0 ? 136 : i % 2 === 0 ? 138 : 140;
        return <path key={i} d={`M${x} ${y}H146`} stroke="#757575" strokeWidth="2" />;
      })}
      {Array.from({ length: 11 }, (_, i) => (
        <text key={i} x={116} y={282 + i * 144} fontSize={20} fill="#a0a0a0">{Math.abs(i - 1)}</text>
      ))}
      <path d="M114 693H146" stroke="#ddd" strokeWidth="2" strokeDasharray="2 2" />
      <path d="M147 234V1758" stroke="#696969" strokeWidth="2" />
    </svg>
  );
}

function DocumentArea() {
  return (
    <main className="flex w-[2232px] shrink-0 flex-col bg-[#424242]">
      <div className="flex h-[40px] shrink-0 border-b-2 border-[#393939]">
        <div className="flex w-[872px] items-center gap-[20px] border-r-2 border-[#393939] bg-[#535353] pl-[15px] font-['Noto_Sans',sans-serif] text-[22px] font-bold whitespace-nowrap text-[#f2f2f2]">
          <svg width="13" height="12" viewBox="0 0 13 12" fill="none" stroke="#b5b5b5" strokeWidth="2.400"><path d="M1 1L12 11M12 1L1 11" /></svg>
          <span className="tracking-[0.92px]">Screen Shot 2016-11-20 at 1.27.14 PM.png @ 100% (Layer 0, RGB/8*) *</span>
        </div>
      </div>
      <div className="flex">
        <div className="flex flex-col">
          <div className="flex">
            <svg width="34" height="34" viewBox="0 0 34 34" className="shrink-0 bg-[#535353]" fill="none" stroke="#777" strokeWidth="1.500" strokeDasharray="2 2"><path d="M25 0V34M0 25H32" /></svg>
            <TopRuler />
          </div>
          <div className="flex">
            <SideRuler />
            <div className="h-[1524px] w-[2166px] bg-[#282828] pt-[168px] pl-[126px]">
              <div className="relative h-[1186px] w-[1914px] bg-[#f7f7f7] shadow-[0_8px_14px_rgba(255,255,255,0.04)]">
                <ElectionMap />
                <div className="absolute top-[72px] left-[10px] flex h-[53px] w-[54px] items-center justify-center rounded-[7px] border-2 border-[#d2d2d2] bg-[#fbfbfb] pr-[2px] pb-[2px]">
                  <svg width="20" height="20" viewBox="0 0 20 20" stroke="#6e6e6e" strokeWidth="4.500"><path d="M10 1V19M1 10H19" /></svg>
                </div>
              </div>
            </div>
          </div>
        </div>
        <div className="w-[32px] bg-[#4a4a4a]" />
      </div>
      <div className="flex h-[32px] items-center bg-[#4a4a4a] text-[20px]">
        <div className="flex h-full w-[488px] items-center border-r-2 border-[#404040] bg-[#535353] pl-[34px]">
          <span className="w-[166px] tracking-[-0.3px] text-[#e8e8e8]">100%</span>
          <span className="w-[268px] tracking-[0.05px] text-[#bdbdbd]">Doc: 6.49M/6.49M</span>
          <svg width="10" height="18" viewBox="0 0 10 18" fill="none" stroke="#d0d0d0" strokeWidth="2"><path d="M1 1L8 9L1 17" /></svg>
        </div>
      </div>
    </main>
  );
}

function IconRail() {
  const box = "flex flex-col items-center border-b-2 border-[#393939] pt-[6px]";
  return (
    <div className="flex w-[74px] flex-col bg-[#535353]">
      <div className={box + " h-[82px]"}>
        <Grip />
        <svg width="30" height="36" viewBox="0 0 30 36" className="mt-[16px] ml-[2px]" fill="none" stroke={L} strokeWidth="2"><rect x="2" y="2" width="8" height="8" /><rect x="2" y="14" width="8" height="8" /><rect x="1" y="25" width="10" height="10" fill={L} stroke="none" /><path d="M17 4H29L25 8Q34 24 18 32Q29 20 20 12L17 15Z" fill={L} stroke="none" /></svg>
      </div>
      <div className={box + " h-[82px]"}>
        <Grip />
        <svg width="42" height="42" viewBox="0 0 42 42" className="mt-[12px] ml-[4px]" fill="none" stroke={L} strokeWidth="2.200"><path d="M3 2H17L27 16M3 2L24 40H39Q41 36 38 34M5 10V25H12M17 5V19" /><rect x="27" y="17" width="12" height="18" /><path d="M31 20L38 30" /></svg>
      </div>
      <div className={box + " h-[138px]"}>
        <Grip />
        <svg width="34" height="42" viewBox="0 0 34 42" className="mt-[13px] ml-[3px]" fill={L}><path d="M9 23H25V41H9zM3 3q8 5 7 11q-2 2-4 1q-5-4-3-12zM13 2h6l-1 9h-4zM21 8q8-1 11 4l-7 5q-4-2-4-9z" /><path d="M8 14L13 23M16 10V23M25 14L21 23" stroke={L} strokeWidth="2" /></svg>
        <svg width="42" height="34" viewBox="0 0 42 34" className="mt-[20px] ml-[1px]" fill={L}><path d="M0 5Q5 6 8 2q9-3 11 4q0 7-10 6Q4 11 0 5zM21 5h20v4H21zM5 22h20v4H5zM27 24Q32 20 37 13q6 10 1 21q-4-7-11-10z" /></svg>
      </div>
    </div>
  );
}

function Tabs({ items }: { items: string[] }) {
  return (
    <div className="flex h-[35px] shrink-0 bg-[#424242] font-['Noto_Sans',sans-serif] text-[20.5px] font-bold tracking-[0.1px]">
      {items.map((t, i) =>
        i === 0 ? (
          <div key={t} className="flex items-center bg-[#535353] px-[14px] text-[#f4f4f4]">{t}</div>
        ) : (
          <div key={t} className="flex items-center border-b-2 border-l-2 border-[#393939] px-[12px] text-[#adadad]">{t}</div>
        )
      )}
      <div className="relative grow border-b-2 border-l-2 border-[#393939]">
        <div className="absolute top-[11px] right-0 flex w-[3px] flex-col gap-[3px]"><i className="h-[2px] bg-[#aaa]" /><i className="h-[2px] bg-[#aaa]" /><i className="h-[2px] bg-[#aaa]" /></div>
      </div>
    </div>
  );
}

const searchArt = <svg width="21" height="21" viewBox="0 0 21 21" fill="none" stroke={L} strokeWidth="2.200"><circle cx="13" cy="8" r="6.500" /><path d="M8 13L1 20" strokeWidth="3.500" /></svg>;

function ColorPanel() {
  return (
    <section className="flex h-[350px] shrink-0 flex-col border-b-2 border-[#393939]">
      <Tabs items={["Color", "Swatches"]} />
      <div className="flex pt-[13px] pl-[16px]">
        <div className="relative mt-[4px] h-[62px] w-[62px]">
          <div className="absolute right-0 bottom-0 size-[40px] border-2 border-[#393939] bg-white" />
          <div className="absolute top-0 left-0 size-[44px] border-2 border-[#999] bg-[#222] p-[2px]"><div className="h-full w-full border-2 border-white bg-[#3279a8]" /></div>
        </div>
        <div className="relative ml-[12px] h-[288px] w-[284px] bg-[linear-gradient(to_top,#000,transparent),linear-gradient(to_right,#fff,#0095ff)]">
          <div className="absolute top-[89px] left-[181px] size-[24px] rounded-full border-2 border-white" />
        </div>
        <svg width="18" height="20" viewBox="0 0 18 20" className="mt-[109px] ml-[13px]"><path d="M2 4Q3 1 8 2L17 10L8 18Q3 19 2 16Z" fill="#dcdcdc" stroke="#222" strokeWidth="2" /></svg>
        <div className="ml-[3px] h-[288px] w-[38px] bg-[linear-gradient(to_bottom,#f00,#f0f,#00f,#0ff,#0f0,#ff0,#f00)]" />
      </div>
    </section>
  );
}

function LibrariesPanel() {
  return (
    <section className="mt-[2px] flex h-[370px] shrink-0 flex-col border-y-2 border-[#393939] font-['Liberation_Sans',sans-serif]">
      <Tabs items={["Libraries", "Adjustments", "Styles"]} />
      <div className="mt-[11px] flex items-center pl-[16px]">
        <div className="flex h-[39px] w-[334px] items-center justify-between rounded-md border-2 border-[#666] bg-[#474747] pr-[10px] pl-[20px] text-[22px] text-[#f2f2f2]">Images<Chevron /></div>
        <div className="ml-[16px] flex h-[50px] w-[46px] items-center justify-center rounded-md border-2 border-[#6a6a6a] bg-[#333]">
          <div className="grid grid-cols-2 gap-[2px]"><i className="size-[10px] bg-[#dcdcdc]" /><i className="size-[10px] bg-[#dcdcdc]" /><i className="size-[10px] bg-[#dcdcdc]" /><i className="size-[10px] bg-[#dcdcdc]" /></div>
        </div>
        <div className="ml-[16px] flex w-[24px] flex-col gap-[3px]"><i className="h-[3px] bg-[#dcdcdc]" /><i className="h-[3px] bg-[#dcdcdc]" /><i className="h-[3px] bg-[#dcdcdc]" /><i className="h-[3px] bg-[#dcdcdc]" /></div>
      </div>
      <div className="mt-[9px] ml-[16px] flex h-[44px] items-center border-b-2 border-[#6c6c6c]">
        {searchArt}
        <span className="ml-[9px] text-[22px] tracking-[0.3px] text-[#777]">Search Adobe Stock</span>
        <div className="ml-auto"><Chevron /></div>
      </div>
      <div className="mt-[12px] flex h-[158px] flex-col border-y-2 border-[#424242] bg-[#4d4d4d] pl-[20px]">
        <div className="mt-[15px] flex items-center gap-[9px] text-[22.5px] text-[#c4c4c4]">
          <svg width="16" height="14" viewBox="0 0 16 14"><path d="M0 0H16L8 14Z" fill="#c8c8c8" /></svg>Colors
        </div>
        <div className="mt-[4px] flex gap-[4px]">
          <div className="h-[90px] w-[136px] border-2 border-[#3c3c3c] bg-[#ff03cc]" />
          <div className="h-[90px] w-[136px] border-2 border-[#3c3c3c] bg-[#ff03cc]" />
        </div>
      </div>
      <div className="flex grow items-center pl-[19px]">
        <Ico s={30}><path d="M18 1L28 13H23V21H13V13H8ZM3 24H33V27H3ZM3 31H33V34H3Z" fill={L} stroke="none" /></Ico>
        <Ico s={32} className="ml-[20px]"><path d="M2 27L27 3V14M2 27H14" /><rect x="21" y="14" width="14" height="17" fill={L} stroke="none" /><circle cx="20" cy="28" r="6.500" fill="#535353" /></Ico>
        <span className="ml-[22px] w-[24px] text-[34px] leading-[46px] text-[#999]">A</span>
        <Ico s={30} className="ml-[24px] overflow-visible">{fxArt("#999")}</Ico>
        <div className="ml-[22px] h-[30px] w-[28px] shrink-0 border-2 border-[#e4e4e4] bg-[#3279a8]" />
        <svg width="34" height="30" viewBox="0 0 34 30" className="ml-[131px] shrink-0" fill="none" stroke={L} strokeWidth="2.800"><path d="M14 26A10 10 0 1 1 13 7A10.500 10.500 0 0 1 32 16" /><path d="M15 21A5 5 0 1 1 17 14L17 21M18 10Q25 9 26 15H19" /><path d="M20 18l10 11M30 18l-10 11" /></svg>
        <Ico s={30} className="ml-[19px]">{trashArt}</Ico>
      </div>
    </section>
  );
}

function LayersPanel() {
  const row = "flex shrink-0 items-center border-b-2 border-[#464646]";
  return (
    <section className="mt-[2px] flex grow flex-col border-t-2 border-[#393939] text-[20px] tracking-[-0.4px]">
      <Tabs items={["Layers", "Channels", "Paths"]} />
      <div className={row + " h-[62px] pt-[8px] pl-[6px]"}>
        <Select label={<><span className="mr-[5px] ml-[4px]">{searchArt}</span>Kind</>} className="w-[181px]" />
        <Ico s={26} className="ml-[21px]"><rect x="2" y="3" width="32" height="30" strokeWidth={3} /><path d="M6 28L13 15L18 23L23 14L30 28Z" fill={L} stroke="none" /></Ico>
        <Ico s={24} className="ml-[22px]"><circle cx="18" cy="18" r="15" strokeWidth={3} /><path d="M29 8A15 15 0 0 1 8 29Z" fill={L} /></Ico>
        <Ico s={24} className="ml-[24px]"><path d="M4 12V4H32V12M18 4V33M11 33H25" strokeWidth={5} /></Ico>
        <Ico s={26} className="ml-[24px]"><path d="M5 5H31V31H5Z" /><path d="M2 2h6v6H2zM28 2h6v6h-6zM2 28h6v6H2zM28 28h6v6h-6z" fill="#535353" strokeWidth={3} /></Ico>
        <Ico s={26} className="ml-[23px]"><path d="M11 16V2H25L34 11V30H22M24 3V12H33" strokeWidth={3} /><rect x="2" y="18" width="18" height="18" fill={L} stroke="none" /></Ico>
      </div>
      <div className={row + " h-[54px] pl-[6px]"}>
        <Select label="Normal" className="w-[268px]" />
        <span className="ml-[7px] w-[85px] text-[#bdbdbd]">Opacity:</span>
        <div className="flex h-[38px] grow items-center border-b-2 border-[#8a8a8a] pt-[2px] pl-[8px] text-[#f0f0f0]">100%</div>
      </div>
      <div className={row + " h-[56px] pl-[11px] text-[#bdbdbd]"}>
        <span className="w-[64px]">Lock:</span>
        <svg width="22" height="22" viewBox="0 0 22 22"><rect x="1" y="1" width="20" height="20" fill="none" stroke={L} strokeWidth="2" /><path d="M1 1h7v7H1zM14 1h7v7h-7zM8 8h6v6H8zM1 14h7v7H1zM14 14h7v7h-7z" fill={L} /></svg>
        <Ico s={28} className="ml-[19px]">{brushBody}</Ico>
        <Ico s={28} className="ml-[15px]">{moveArt}</Ico>
        <Ico s={30} className="ml-[15px]"><path d="M7 9H24L30 16V28H7Z" strokeWidth={2.600} /><path d="M22 9V17H30" fill={L} /><path d="M0 9h3M33 9h3M0 28h3M33 28h3M7 2v3M30 2v3M7 32v3M30 32v3" strokeWidth={2.600} /></Ico>
        <svg width="22" height="28" viewBox="0 0 22 28" className="ml-[19px]" fill={L}><rect x="1" y="12" width="20" height="15" rx="2" /><path d="M6 13V7Q6 2 11 2Q16 2 16 7V13" fill="none" stroke={L} strokeWidth="2.600" /><circle cx="11" cy="19" r="2.500" fill="#535353" /></svg>
        <span className="ml-[54px] w-[38px]">Fill:</span>
        <div className="flex h-[38px] grow items-center border-b-2 border-[#8a8a8a] pl-[8px] text-[#f0f0f0]">100%</div>
      </div>
      <div className={row + " h-[59px] pt-[1px]"}>
        <div className="flex h-full w-[62px] items-center justify-center border-r-2 border-[#454545]">
          <svg width="26" height="18" viewBox="0 0 26 18"><path d="M0 9Q13-9 26 9Q13 27 0 9Z" fill={L} /><circle cx="13" cy="9" r="6" fill="#454545" /><circle cx="15" cy="7" r="2" fill={L} /></svg>
        </div>
        <div className="flex h-full grow items-center bg-[#6b6b6b] pl-[2px]">
          <div className="relative flex h-[56px] w-[72px] items-center justify-center">
            <svg width="72" height="56" viewBox="0 0 72 56" className="absolute inset-0" fill="none" stroke="#fff" strokeWidth="2"><path d="M24 2H1V18M48 2H71V18M1 38V54H24M71 38V54H48" /></svg>
            <div className="relative h-[44px] w-[64px] border-2 border-[#2e2e2e] bg-[#f7f7f7]">
              <svg viewBox="274 402 1914 1186" preserveAspectRatio="none" className="h-full w-full"><Shapes /></svg>
            </div>
          </div>
          <span className="ml-[13px] tracking-[-0.2px] text-[#f4f4f4]">Layer 0</span>
        </div>
      </div>
      <div className="grow border-b-2 border-[#424242] bg-[#4d4d4d]" />
      <div className="flex h-[49px] shrink-0 items-center pb-[2px] pl-[71px]">
        <svg width="28" height="16" viewBox="0 0 28 16" fill="none" stroke="#9a9a9a" strokeWidth="2.400"><path d="M12 3Q8 0 4 3Q-1 8 4 13Q8 16 12 13M16 3Q20 0 24 3Q29 8 24 13Q20 16 16 13M8 8H20" /></svg>
        <Ico s={28} className="ml-[27px] overflow-visible">{fxArt(L)}<path d="M34 35h6l-3 4z" fill="#fff" stroke="none" /></Ico>
        <svg width="25" height="20" viewBox="0 0 25 20" className="ml-[28px]"><rect width="25" height="20" rx="1" fill={L} /><circle cx="12.500" cy="10" r="6" fill="#535353" /></svg>
        <Ico s={26} className="ml-[28px] overflow-visible"><circle cx="18" cy="18" r="14" strokeWidth={3} /><path d="M28 8A14 14 0 0 1 8 28Z" fill={L} /><path d="M33 38h8l-4 5z" fill="#fff" stroke="none" /></Ico>
        <svg width="24" height="22" viewBox="0 0 24 22" className="ml-[29px]" fill={L}><path d="M0 0H11L13 2H0ZM0 5H23L24 6V22H0Z" /></svg>
        <svg width="22" height="22" viewBox="0 0 22 22" className="ml-[31px]" fill="none" stroke={L} strokeWidth="2.200"><path d="M1 12V1H20V21H10L1 12H10V21" /></svg>
        <Ico s={26} className="ml-[30px]">{trashArt}</Ico>
      </div>
    </section>
  );
}

const stars: [number, number, number][] = [
  [8, 72, 1], [22, 95, 1.5], [12, 150, 1], [28, 173, 1.2], [5, 205, 1], [17, 248, 1.2], [6, 248, 1.6], [26, 278, 1], [10, 314, 1.6], [15, 314, 1.6],
  [4, 403, 1.3], [24, 372, 1], [29, 438, 1.3], [11, 454, 1.3], [20, 461, 1.2], [6, 466, 1.3], [30, 508, 0.8], [14, 548, 0.7], [25, 600, 0.7],
];

export default function App() {
  return (
    <div className="relative flex h-[1800px] w-[2880px] flex-col overflow-hidden bg-[linear-gradient(to_bottom,#1d3a69_0,#2a4a80_150px,#3c5c98_300px,#5873ac_480px,#7f95c8_700px,#8da1d3_880px,#2d599c_905px,#143873_925px,#132f68_990px,#3d4b86_1120px,#1a3573_1240px,#0c1a38_1290px,#060b16_1340px,#101a3a_1390px,#04070d_1440px,#03070a_100%)] font-['Inter',sans-serif]">
      <MenuBar />
      <svg width="32" height="700" className="absolute top-0 left-0" fill="#c3d3f0">
        {stars.map(([x, y, r]) => (
          <circle key={`${x}-${y}`} cx={x} cy={y} r={r} opacity={0.8} />
        ))}
      </svg>
      <div className="mt-[2px] ml-[32px] flex h-[1746px] w-[2880px] shrink-0 flex-col overflow-hidden rounded-tl-lg border-2 border-[#393939] bg-[#535353]">
        <div className="relative flex h-[44px] shrink-0 items-center justify-center border-b-2 border-[#393939] pt-[3px]">
          <div className="absolute top-[12px] left-[16px] flex gap-[16px]">
            <i className="flex size-6 items-center justify-center rounded-full bg-[#fc5b57]"><i className="size-2 rounded-full bg-[#4d0000]" /></i>
            <i className="size-6 rounded-full bg-[#fdbc40]" />
            <i className="size-6 rounded-full bg-[#34c84a]" />
          </div>
          <span className="text-[25px] tracking-[0.55px] text-[#e6e6e6]">Adobe Photoshop CC 2015.5</span>
        </div>
        <OptionsBar />
        <div className="flex grow">
          <Toolbar />
          <Divider />
          <DocumentArea />
          <Divider />
          <div className="flex w-[528px] shrink-0 flex-col">
            <div className="flex h-[24px] shrink-0 items-center border-b-2 border-[#393939] bg-[#424242] pl-[48px]">
              <svg width="15" height="10" viewBox="0 0 15 10" fill="none" stroke="#cfcfcf" strokeWidth="1.600"><path d="M6 1L2 5L6 9M14 1L10 5L14 9" /></svg>
            </div>
            <div className="flex grow">
              <IconRail />
              <Divider />
              <div className="flex w-[448px] flex-col bg-[#535353]">
                <ColorPanel />
                <LibrariesPanel />
                <LayersPanel />
              </div>
            </div>
          </div>
        </div>
      </div>
    </div>
  );
}
